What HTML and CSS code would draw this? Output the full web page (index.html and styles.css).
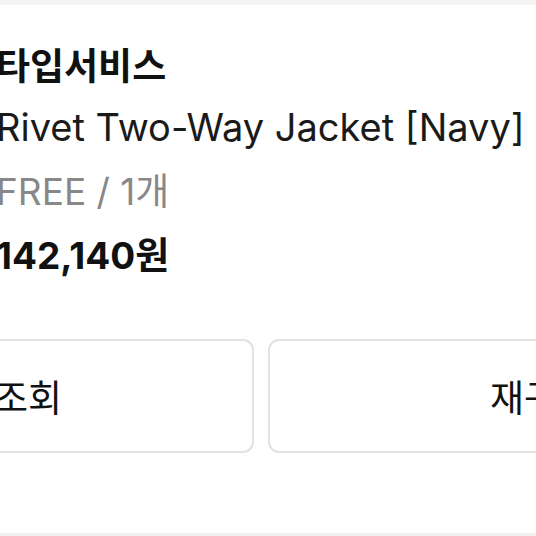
FILE: index.html
```html
<!DOCTYPE html>
<html lang="ko">
<head>
<meta charset="utf-8">
<link rel="stylesheet" href="styles.css">
</head>
<body>
<div class="topband"></div>
<section class="card">
  <div class="item">
    <div class="thumb"></div>
    <div class="info">
      <div class="brand">타입서비스</div>
      <div class="name">Rivet Two-Way Jacket [Navy]</div>
      <div class="option">FREE / 1개</div>
      <div class="price">142,140원</div>
    </div>
  </div>
  <div class="actions">
    <button class="btn">배송조회</button>
    <button class="btn btn-right">재구매</button>
  </div>
</section>
<div class="divider"></div>
</body>
</html>
```
FILE: styles.css
```css
html, body {
  margin: 0;
  padding: 0;
  background: #ffffff;
  overflow: hidden;
  width: 536px;
  height: 536px;
}
body {
  font-family: "Inter", "Noto Sans CJK KR", sans-serif;
  color: #111;
}
.topband {
  height: 5px;
  background: #f3f3f3;
}
.card {
  margin-left: -266px;
  width: 1054px;
  padding-top: 40px;
  height: 486px;
  box-sizing: border-box;
}
.item {
  display: flex;
  gap: 22px;
}
.thumb {
  width: 240px;
  flex: none;
}
.info {
  display: flex;
  flex-direction: column;
}
.brand {
  font-size: 37px;
  font-weight: 700;
  line-height: 44px;
  color: #111;
}
.name {
  font-size: 38px;
  line-height: 44px;
  margin-top: 16px;
  color: #1a1a1a;
}
.option {
  font-size: 37px;
  line-height: 44px;
  margin-top: 21px;
  color: #888;
}
.price {
  font-size: 37px;
  font-weight: 700;
  line-height: 44px;
  margin-top: 20px;
  color: #111;
}
.actions {
  display: flex;
  gap: 14px;
  margin-top: 61px;
}
.btn {
  flex: 0 0 520px;
  height: 114px;
  border: 2px solid #e2e2e2;
  border-radius: 11px;
  background: #fff;
  font-family: "Inter", "Noto Sans CJK KR", sans-serif;
  font-size: 37px;
  color: #111;
  padding: 0;
}
.btn-right {
  text-indent: 26px;
}
.divider {
  height: 3px;
  background: #f1f1f1;
  margin-top: 42px;
}
```
